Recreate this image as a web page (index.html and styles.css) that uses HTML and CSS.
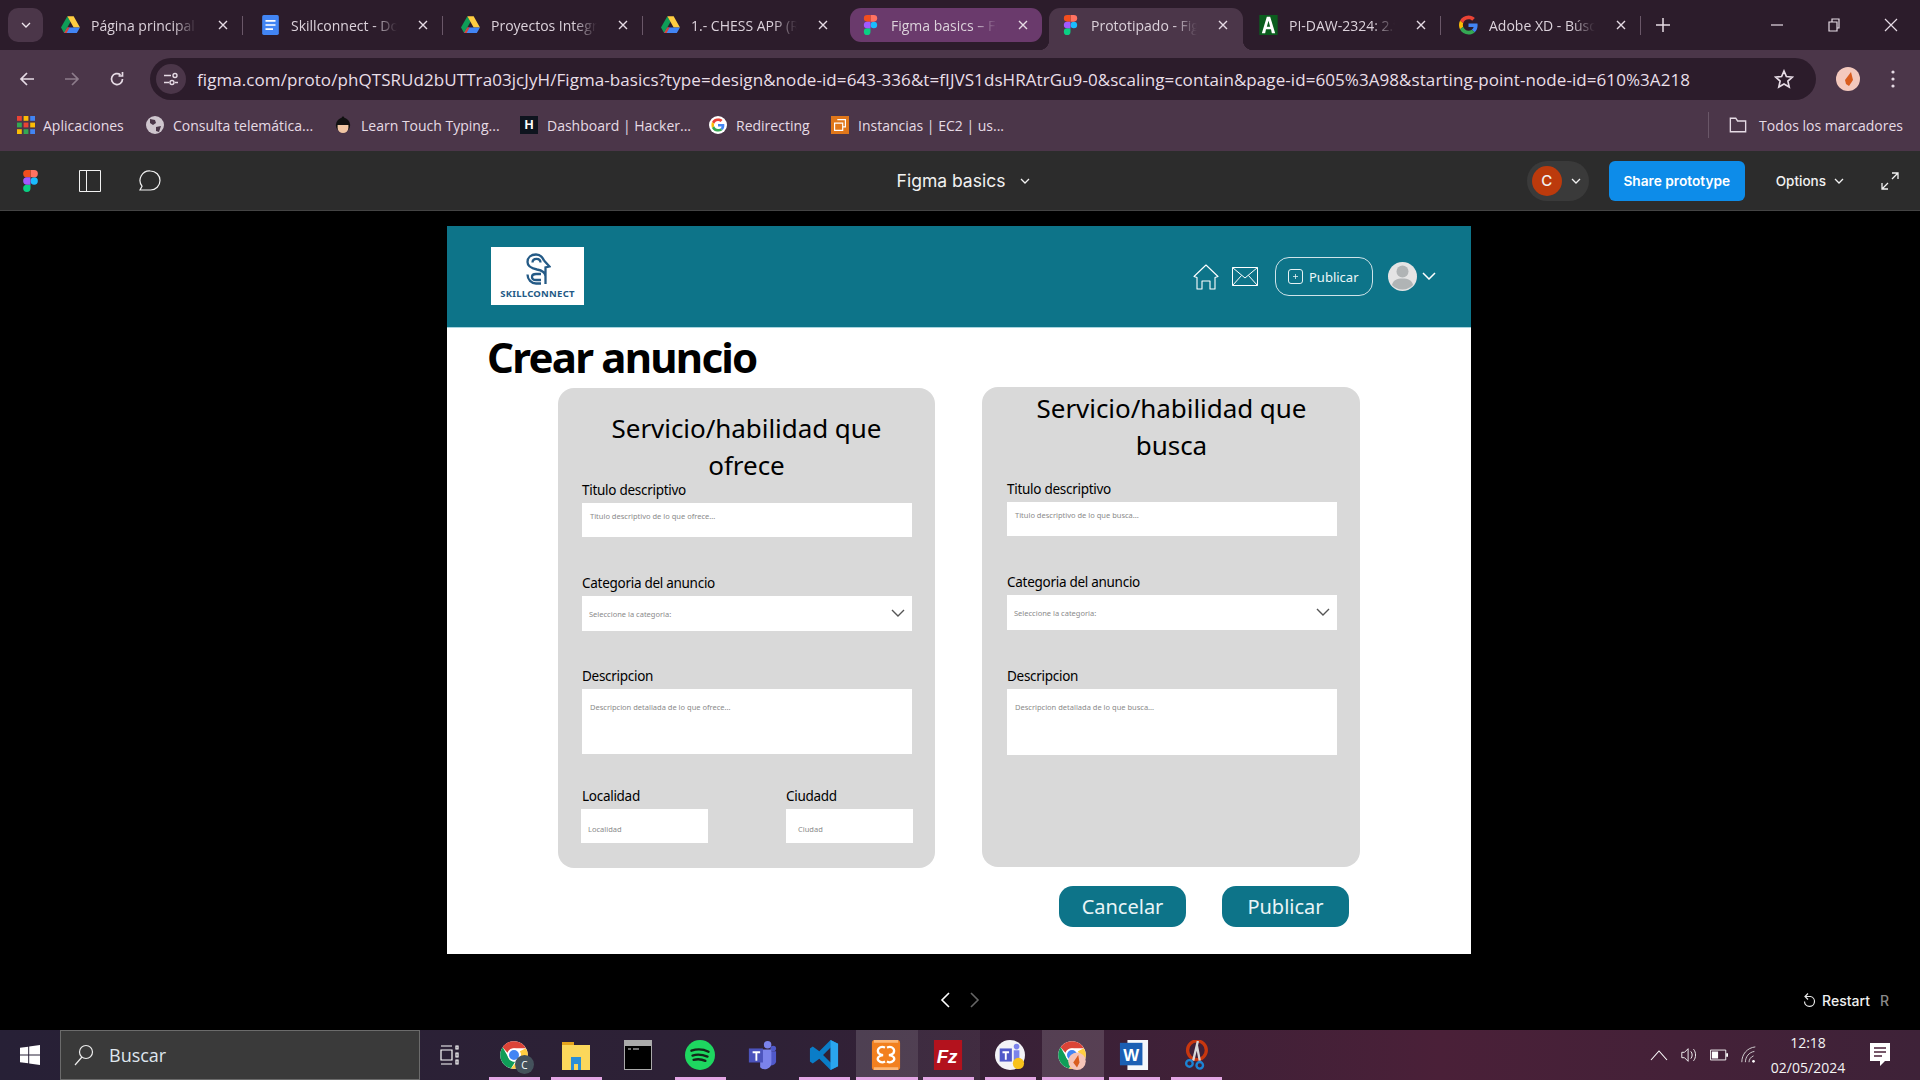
FILE: index.html
```html
<!DOCTYPE html>
<html lang="es">
<head>
<meta charset="utf-8">
<title>Figma basics – Figma</title>
<link rel="stylesheet" href="styles.css">
</head>
<body>
<svg class="defs" width="0" height="0" aria-hidden="true">
  <symbol id="figma" viewBox="0 0 38 57"><path fill="#1ABCFE" d="M19 28.5a9.5 9.5 0 1 1 19 0 9.5 9.5 0 0 1-19 0z"/><path fill="#0ACF83" d="M0 47.5A9.5 9.5 0 0 1 9.5 38H19v9.5a9.5 9.5 0 1 1-19 0z"/><path fill="#FF7262" d="M19 0v19h9.5a9.5 9.5 0 1 0 0-19H19z"/><path fill="#F24E1E" d="M0 9.5A9.5 9.5 0 0 0 9.5 19H19V0H9.5A9.5 9.5 0 0 0 0 9.5z"/><path fill="#A259FF" d="M0 28.5A9.5 9.5 0 0 0 9.5 38H19V19H9.5A9.5 9.5 0 0 0 0 28.5z"/></symbol>
  <symbol id="drive" viewBox="0 0 24 22"><path fill="#0F9D58" d="M8 0 0 14l4 7L12 7z"/><path fill="#FFCD40" d="M8 0h8l8 14h-8z"/><path fill="#4285F4" d="M8 14h16l-4 7H4z"/><path fill="#DB4437" d="M4 21l4-7h3l-4 7z"/></symbol>
  <symbol id="google" viewBox="0 0 48 48"><path fill="#EA4335" d="M24 9.5c3.54 0 6.71 1.22 9.21 3.6l6.85-6.85C35.9 2.38 30.47 0 24 0 14.62 0 6.51 5.38 2.56 13.22l7.98 6.19C12.43 13.72 17.74 9.5 24 9.5z"/><path fill="#4285F4" d="M46.98 24.55c0-1.57-.15-3.09-.38-4.55H24v9.02h12.94c-.58 2.96-2.26 5.48-4.78 7.18l7.73 6c4.51-4.18 7.09-10.36 7.09-17.65z"/><path fill="#FBBC05" d="M10.53 28.59c-.48-1.45-.76-2.99-.76-4.59s.27-3.14.76-4.59l-7.98-6.19C.92 16.46 0 20.12 0 24c0 3.88.92 7.54 2.56 10.78l7.97-6.19z"/><path fill="#34A853" d="M24 48c6.48 0 11.93-2.13 15.89-5.81l-7.73-6c-2.15 1.45-4.92 2.3-8.16 2.3-6.26 0-11.57-4.22-13.47-9.91l-7.98 6.19C6.51 42.62 14.62 48 24 48z"/></symbol>
  <symbol id="chrome" viewBox="0 0 24 24"><circle cx="12" cy="12" r="11" fill="#fff"/><path fill="#DB4437" d="M12 1a11 11 0 0 1 9.5 5.5H12a5.5 5.5 0 0 0-5.2 3.7L2.9 5.8A11 11 0 0 1 12 1z"/><path fill="#0F9D58" d="M2.9 5.8l4.8 8.3a5.5 5.5 0 0 0 5.2 3.3L9.6 22.7A11 11 0 0 1 2.9 5.8z"/><path fill="#FFCD40" d="M21.5 6.5A11 11 0 0 1 9.6 22.7l4.8-5.8A5.5 5.5 0 0 0 16.7 9z"/><circle cx="12" cy="12" r="4.6" fill="#4285F4" stroke="#fff" stroke-width="1.2"/></symbol>
  <symbol id="close" viewBox="0 0 10 10"><path d="M1 1l8 8M9 1l-8 8" stroke="currentColor" stroke-width="1.4" fill="none"/></symbol>
  <symbol id="chev" viewBox="0 0 10 6"><path d="M1 1l4 4 4-4" stroke="currentColor" stroke-width="1.3" fill="none"/></symbol>
</svg>

<header class="tabstrip">
  <button class="tabmenu"><svg class="i10"><use href="#chev"/></svg></button>
  <div class="tabs">
    <div class="tab sep"><svg class="fav"><use href="#drive"/></svg><span class="tabtext">Página principal - Google Drive</span><svg class="tabx"><use href="#close"/></svg></div>
    <div class="tab sep"><svg class="fav" viewBox="0 0 20 24"><path fill="#4285F4" d="M2 0h16a2 2 0 0 1 2 2v20a2 2 0 0 1-2 2H2a2 2 0 0 1-2-2V2a2 2 0 0 1 2-2z"/><path stroke="#fff" stroke-width="2" d="M4 7h12M4 12h12M4 17h9"/></svg><span class="tabtext">Skillconnect - Documentos</span><svg class="tabx"><use href="#close"/></svg></div>
    <div class="tab sep"><svg class="fav"><use href="#drive"/></svg><span class="tabtext">Proyectos Integrados - Drive</span><svg class="tabx"><use href="#close"/></svg></div>
    <div class="tab"><svg class="fav"><use href="#drive"/></svg><span class="tabtext">1.- CHESS APP (Rafa) - Drive</span><svg class="tabx"><use href="#close"/></svg></div>
    <div class="tab tab-group"><svg class="fav"><use href="#figma"/></svg><span class="tabtext">Figma basics – Figma</span><svg class="tabx"><use href="#close"/></svg></div>
    <div class="tab tab-active"><svg class="fav"><use href="#figma"/></svg><span class="tabtext">Prototipado - Figma</span><svg class="tabx"><use href="#close"/></svg></div>
    <div class="tab sep"><svg class="fav" viewBox="0 0 22 24"><path fill="#0b5d1e" d="M0 0h22v24H0z"/><path fill="#fff" d="M9 2h4l6 20h-4l-1-5H8l-1 5H3zm2 5-2 7h4z"/></svg><span class="tabtext">PI-DAW-2324: 2.ª evaluación</span><svg class="tabx"><use href="#close"/></svg></div>
    <div class="tab sep"><svg class="fav"><use href="#google"/></svg><span class="tabtext">Adobe XD - Búsqueda</span><svg class="tabx"><use href="#close"/></svg></div>
    <svg class="plus" viewBox="0 0 14 14"><path d="M7 0v14M0 7h14" stroke="#e6dbe5" stroke-width="1.5"/></svg>
  </div>
  <div class="winctl">
    <svg class="win" viewBox="0 0 14 14"><path d="M1 7h12" stroke="#e6dbe5" stroke-width="1.2"/></svg>
    <svg class="win" viewBox="0 0 14 14"><path d="M2 4h8v9H2zM5 4V1h7v9h-2" stroke="#e6dbe5" stroke-width="1.2" fill="none"/></svg>
    <svg class="win" viewBox="0 0 14 14"><path d="M1 1l12 12M13 1L1 13" stroke="#e6dbe5" stroke-width="1.2"/></svg>
  </div>
</header>

<nav class="toolbar">
  <svg class="nav" viewBox="0 0 16 16"><path d="M15 8H2M8 2 2 8l6 6" stroke="#e6dbe5" stroke-width="1.7" fill="none"/></svg>
  <svg class="nav" viewBox="0 0 16 16"><path d="M1 8h13M8 2l6 6-6 6" stroke="#8d7c8b" stroke-width="1.7" fill="none"/></svg>
  <svg class="nav" viewBox="0 0 16 16"><path d="M13.5 8A5.5 5.5 0 1 1 11.5 3.8M13.5 1v4h-4" stroke="#e6dbe5" stroke-width="1.7" fill="none"/></svg>
  <div class="omnibox">
    <span class="tune"><svg class="i16" viewBox="0 0 16 16"><path d="M1 4.500h7M1 11.500h5M12 11.500h3" stroke="#e6dbe5" stroke-width="1.500"/><circle cx="12" cy="4.500" r="2" fill="none" stroke="#e6dbe5" stroke-width="1.400"/><circle cx="9" cy="11.500" r="2" fill="none" stroke="#e6dbe5" stroke-width="1.400"/></svg></span>
    <span class="url">figma.com/proto/phQTSRUd2bUTTra03jcJyH/Figma-basics?type=design&amp;node-id=643-336&amp;t=fIJVS1dsHRAtrGu9-0&amp;scaling=contain&amp;page-id=605%3A98&amp;starting-point-node-id=610%3A218</span>
    <svg class="star" viewBox="0 0 20 20"><path d="M10 2l2.400 5.500 6 .6-4.500 4 1.300 5.900L10 15l-5.200 3 1.300-5.900-4.500-4 6-.6z" fill="none" stroke="#e6dbe5" stroke-width="1.700"/></svg>
  </div>
  <span class="profile"><svg viewBox="0 0 24 24"><circle cx="12" cy="12" r="12" fill="#f4c9bd"/><path fill="#d95d1e" d="M9 13l6-8 2 8-4 6-3-2z"/></svg></span>
  <svg class="dots" viewBox="0 0 4 18"><circle cx="2" cy="2" r="1.600" fill="#e6dbe5"/><circle cx="2" cy="9" r="1.600" fill="#e6dbe5"/><circle cx="2" cy="16" r="1.600" fill="#e6dbe5"/></svg>
</nav>

<div class="bookmarks">
  <div class="bm-list">
    <span class="bm bm-apps"><svg class="bmi" viewBox="0 0 15 15"><g><path fill="#ea4335" d="M0 0h4v4H0z"/><path fill="#fbbc05" d="M5.500 0h4v4h-4z"/><path fill="#4285f4" d="M11 0h4v4h-4z"/><path fill="#34a853" d="M0 5.500h4v4H0z"/><path fill="#ea4335" d="M5.500 5.500h4v4h-4z"/><path fill="#fbbc05" d="M11 5.500h4v4h-4z"/><path fill="#fbbc05" d="M0 11h4v4H0z"/><path fill="#34a853" d="M5.500 11h4v4h-4z"/><path fill="#4285f4" d="M11 11h4v4h-4z"/></g></svg>Aplicaciones</span>
    <span class="bm"><svg class="bmi" viewBox="0 0 18 18"><circle cx="9" cy="9" r="9" fill="#cfc6ce"/><path fill="#4b3649" d="M4 3l5 1 1 3-3 2-3-2zM10 11l5-1-2 6-3-1z"/></svg>Consulta telemática...</span>
    <span class="bm"><svg class="bmi" viewBox="0 0 18 20"><circle cx="9" cy="2" r="1.500" fill="#111"/><circle cx="9" cy="10" r="8" fill="#111"/><path fill="#f1c6a3" d="M3 10h12v3a6 6 0 0 1-12 0z"/></svg>Learn Touch Typing...</span>
    <span class="bm"><svg class="bmi" viewBox="0 0 20 20"><path fill="#0e141e" d="M0 0h20v20H0z"/><text x="10" y="14.500" text-anchor="middle" class="hr">H</text></svg>Dashboard | Hacker...</span>
    <span class="bm"><svg class="bmi" viewBox="0 0 48 48"><circle cx="24" cy="24" r="24" fill="#fff"/><g transform="translate(6 6) scale(.75)"><use href="#google" width="48" height="48"/></g></svg>Redirecting</span>
    <span class="bm"><svg class="bmi" viewBox="0 0 20 20"><path fill="#e0771a" d="M0 0h20v20H0z"/><path d="M7 4h9v8h-3M4 8h9v8H4z" fill="none" stroke="#fff" stroke-width="1.300"/></svg>Instancias | EC2 | us...</span>
  </div>
  <span class="bm bm-all"><svg class="bmi" viewBox="0 0 20 18"><path d="M1.500 1.500h6l2 3h9v12h-17z" fill="none" stroke="#e6dbe5" stroke-width="1.500"/></svg>Todos los marcadores</span>
</div>

<div class="figbar">
  <div class="fig-left">
    <svg class="figlogo"><use href="#figma"/></svg>
    <svg class="figico" viewBox="0 0 22 22"><path d="M.5.500h21v21H.5zM7.500.5v21" fill="none" stroke="#f2f2f2"/></svg>
    <svg class="figico" viewBox="0 0 22 22"><path d="M11.500 1a9.500 9.500 0 0 1 0 19H1l2-3.800A9.500 9.500 0 0 1 11.500 1z" fill="none" stroke="#f2f2f2" stroke-width="1.200"/></svg>
  </div>
  <div class="fig-title">Figma basics <svg class="i10"><use href="#chev"/></svg></div>
  <div class="fig-right">
    <span class="avatars"><span class="avatar">C</span><svg class="i10"><use href="#chev"/></svg></span>
    <button class="share">Share prototype</button>
    <span class="options">Options <svg class="i10"><use href="#chev"/></svg></span>
    <svg class="expand" viewBox="0 0 20 20"><path d="M12 2h6v6M18 2l-6 6M2 12v6h6M2 18l6-6" fill="none" stroke="#f2f2f2" stroke-width="1.300"/></svg>
  </div>
</div>

<main class="canvas">
  <section class="frame">
    <header class="apphead">
      <div class="logo">
        <svg class="logomark" viewBox="0 0 26 32"><path d="M19 7.500C17 3 14 1.500 11 1.500 6 1.500 2.500 4.500 2.500 9c0 5 4.500 6.500 9.500 7.500 4 .7 8 2 8.500 6.500M7.500 9.500C7.500 7 9.500 5.800 11.500 5.800S15.500 7 15.500 9.500M19 7.500l5.500 6-4 1V31M2.500 21.500c0 5 4 9 8.500 9h5M7 24c0-2 2-3 4-3h5M7 24c0 2 2 3 4 3h5" fill="none" stroke="#245a86" stroke-width="2.300"/></svg>
        <span class="logotext">SKILLCONNECT</span>
      </div>
      <div class="appnav">
        <svg class="home" viewBox="0 0 26 26"><path d="M1 12.500 13 1l12 11.500-3 1V25h-5v-8H9v8H4V13.500z" fill="none" stroke="#fff" stroke-width="1.100" stroke-linejoin="round"/></svg>
        <svg class="mail" viewBox="0 0 26 19"><path d="M.5.500h25v18H.5zM.5.500 13 11 25.500.5M.5 18.500l9-10M25.500 18.500l-9-10" fill="none" stroke="#fff"/></svg>
        <button class="pub-btn"><svg class="pub-ico" viewBox="0 0 15 15"><rect x=".5" y=".5" width="14" height="14" rx="2.500" fill="none" stroke="#e6f2f4"/><path d="M5 7.500h5M7.500 5v5" stroke="#e6f2f4" stroke-width=".8"/></svg>Publicar</button>
        <svg class="user" viewBox="0 0 29 29"><circle cx="14.500" cy="14.500" r="14.500" fill="#e4e4e4"/><circle cx="14.500" cy="9.500" r="6" fill="#b0b4b5"/><path fill="#b0b4b5" d="M4 23c1-5 5-6.500 10.500-6.500S24 18 25 23a14.500 14.500 0 0 1-21 0z"/></svg>
        <svg class="userchev" viewBox="0 0 14 8"><path d="M1 1l6 6 6-6" fill="none" stroke="#fff" stroke-width="1.500"/></svg>
      </div>
    </header>
    <h1 class="page-title">Crear anuncio</h1>
    <div class="cards">
      <form class="card card-offer">
        <h2 class="card-title">Servicio/habilidad que ofrece</h2>
        <div class="field"><label class="label">Titulo descriptivo</label><div class="input input-text">Titulo descriptivo de lo que ofrece...</div></div>
        <div class="field"><label class="label">Categoria del anuncio</label><div class="input input-select">Seleccione la categoria:<svg class="selchev" viewBox="0 0 14 8"><path d="M1 1l6 6 6-6" fill="none" stroke="#555" stroke-width="1.400"/></svg></div></div>
        <div class="field"><label class="label">Descripcion</label><div class="input input-area">Descripcion detallada de lo que ofrece...</div></div>
        <div class="field-pair">
          <div class="field-l"><label class="label">Localidad</label><div class="input input-short">Localidad</div></div>
          <div class="field-r"><label class="label">Ciudadd</label><div class="input input-short input-city">Ciudad</div></div>
        </div>
      </form>
      <form class="card card-seek">
        <h2 class="card-title">Servicio/habilidad que busca</h2>
        <div class="field"><label class="label">Titulo descriptivo</label><div class="input input-text">Titulo descriptivo de lo que busca...</div></div>
        <div class="field"><label class="label">Categoria del anuncio</label><div class="input input-select">Seleccione la categoria:<svg class="selchev" viewBox="0 0 14 8"><path d="M1 1l6 6 6-6" fill="none" stroke="#555" stroke-width="1.400"/></svg></div></div>
        <div class="field"><label class="label">Descripcion</label><div class="input input-area input-area-tall">Descripcion detallada de lo que busca...</div></div>
      </form>
    </div>
    <div class="actions">
      <button class="action">Cancelar</button>
      <button class="action">Publicar</button>
    </div>
  </section>
  <div class="pager">
    <div class="pager-arrows">
      <svg class="arrow" viewBox="0 0 10 16"><path d="M9 1 2 8l7 7" fill="none" stroke="#fff" stroke-width="1.600"/></svg>
      <svg class="arrow" viewBox="0 0 10 16"><path d="M1 1l7 7-7 7" fill="none" stroke="#666" stroke-width="1.600"/></svg>
    </div>
    <div class="restart"><svg class="restart-ico" viewBox="0 0 14 16"><path d="M3.500 4.500h5a5 5 0 1 1-6 5M6 1.500l-3 3 3 3" fill="none" stroke="#e6e6e6" stroke-width="1.200"/></svg>Restart<span class="restart-key">R</span></div>
  </div>
</main>

<footer class="taskbar">
  <svg class="start" viewBox="0 0 20 20"><path fill="#fff" d="M0 2.800 8.200 1.700v7.800H0zM9.200 1.500 20 0v9.500H9.200zM0 10.500h8.200v7.800L0 17.200zM9.200 10.500H20V20L9.200 18.500z"/></svg>
  <div class="search"><svg class="search-ico" viewBox="0 0 20 22"><circle cx="12" cy="8" r="6.500" fill="none" stroke="#eee" stroke-width="1.200"/><path d="M8 13l-7 8" stroke="#eee" stroke-width="1.200"/></svg>Buscar</div>
  <svg class="taskview" viewBox="0 0 20 20"><path d="M1 1h11M1 19h11M1 5h11v10H1zM16 1h2v3h-2zM16 8h2v4h-2zM16 15h2v4h-2z" fill="none" stroke="#fff" stroke-width="1.200"/></svg>
  <div class="apps">
    <div class="app on"><svg class="appi"><use href="#chrome"/></svg><span class="badge">C</span></div>
    <div class="app on"><svg class="appi" viewBox="0 0 28 30"><path fill="#e5a41c" d="M0 2h12v4H0z"/><path fill="#fbd75b" d="M0 5h28v25H0z"/><path fill="#2b8fd6" d="M9 17h10v13h-3v-6h-4v6H9z"/></svg></div>
    <div class="app"><svg class="appi" viewBox="0 0 28 30"><path fill="#aaa" d="M0 0h28v30H0z"/><path fill="#000" d="M1 6h26v23H1z"/><path d="M4 9h3M9 9h6" stroke="#ddd"/></svg></div>
    <div class="app on"><svg class="appi" viewBox="0 0 28 28"><circle cx="14" cy="14" r="14" fill="#1ed760"/><path d="M6 10c6-2 11-1.500 16 1M7 14.500c5-1.500 9-1 14 1M8 18.500c4-1 8-.5 11 1" fill="none" stroke="#14261a" stroke-width="2.200" stroke-linecap="round"/></svg></div>
    <div class="app"><svg class="appi" viewBox="0 0 30 32"><circle cx="21" cy="5" r="4" fill="#7b83eb"/><circle cx="27" cy="9" r="3" fill="#5059c9"/><path fill="#5059c9" d="M22 12h8v11a5 5 0 0 1-8 3z"/><path fill="#7b83eb" d="M13 10h12v14a7 7 0 0 1-12 5z"/><path fill="#4b53bc" d="M1 9h15v15H1z"/><path fill="#fff" d="M5 12h8v2h-3v8H8v-8H5z"/></svg></div>
    <div class="app on"><svg class="appi" viewBox="0 0 30 32"><path fill="#0a7dc8" d="M22 0l8 4v24l-8 4-12-12-7 5-3-2V9l3-2 7 5zm0 8-8 8 8 8z"/><path fill="#2aa5ee" d="M22 0l8 4v24l-8 4z"/></svg></div>
    <div class="app on hot"><svg class="appi" viewBox="0 0 30 32"><rect width="30" height="32" rx="3" fill="#f2801f"/><path fill="#fbb677" d="M2 0h26v3H2zM2 29h26v3H2z"/><path d="M14 8c-6-2-9 2-7 6 1 1 3 2 5 2-5 0-7 4-5 6 2 2 5 2 7 1M16 8c6-2 9 2 7 6-1 1-3 2-5 2 5 0 7 4 5 6-2 2-5 2-7 1" fill="none" stroke="#fff" stroke-width="2.400"/></svg></div>
    <div class="app on warm"><svg class="appi" viewBox="0 0 30 32"><path fill="#b3121d" d="M0 0h30v32H0z"/><text x="14" y="24" text-anchor="middle" class="fz">Fz</text></svg></div>
    <div class="app on"><svg class="appi" viewBox="0 0 32 32"><circle cx="16" cy="16" r="16" fill="#f3f3f7"/><path fill="#5059c9" d="M5 9h13v14H5z"/><path fill="#fff" d="M8 12h7v2h-2.500v7h-2v-7H8z"/><path fill="#7b83eb" d="M20 11h6v10a4 4 0 0 1-6 2z"/><circle cx="23" cy="7" r="3" fill="#7b83eb"/><circle cx="25" cy="25" r="6" fill="#f8c21c"/></svg></div>
    <div class="app on hot"><svg class="appi" viewBox="0 0 24 24"><use href="#chrome" width="24" height="24"/><circle cx="16" cy="17" r="7" fill="#f5c4b8"/><path fill="#d95d1e" d="M13 18l4-6 1 6-2 4z"/></svg></div>
    <div class="app on"><svg class="appi" viewBox="0 0 30 32"><path fill="#f4f7fb" d="M8 0h22v32H8z"/><path fill="#1b5fb4" d="M0 3h24v24H0z"/><text x="12" y="22" text-anchor="middle" class="wd">W</text></svg></div>
    <div class="app on"><svg class="appi" viewBox="0 0 30 32"><circle cx="16" cy="11" r="10" fill="none" stroke="#c8370f" stroke-width="3.500"/><path d="M17 1l-5 21M16 6l3 16" stroke="#d8d8d8" stroke-width="2.500"/><circle cx="8" cy="25" r="3.500" fill="none" stroke="#1c84d4" stroke-width="2.500"/><circle cx="19" cy="27" r="3.500" fill="none" stroke="#1c84d4" stroke-width="2.500"/></svg></div>
  </div>
  <div class="tray">
    <svg class="tray-i" viewBox="0 0 18 12"><path d="M1 11l8-9 8 9" fill="none" stroke="#fff" stroke-width="1.100"/></svg>
    <svg class="tray-i" viewBox="0 0 20 20"><path d="M2 7h3l4-4v14l-4-4H2zM12 6c2 2 2 6 0 8M15 3.500c3 3.500 3 9.500 0 13" fill="none" stroke="#fff"/></svg>
    <svg class="tray-i" viewBox="0 0 20 14"><path d="M.5 1.500h17v11H.5z" fill="none" stroke="#fff"/><path fill="#fff" d="M2 3h7v8H2zM18 5h2v4h-2z"/></svg>
    <svg class="tray-i" viewBox="0 0 18 20"><path d="M1 18C1 9 7 2 16 1M5 18c0-6 4-11 10-12M9 18c0-3 2-6 5-7" fill="none" stroke="#ddd"/><circle cx="14" cy="17" r="1.500" fill="#fff"/></svg>
    <div class="clock"><span>12:18</span><span>02/05/2024</span></div>
    <svg class="notif" viewBox="0 0 20 24"><path fill="#fff" d="M0 0h20v18h-5l-5 5v-5H0z"/><path d="M4 5h12M4 9h12M4 13h8" stroke="#4a2038" stroke-width="1.300"/></svg>
  </div>
</footer>
</body>
</html>
```

FILE: styles.css
```css
* { box-sizing: border-box; }
html, body { margin: 0; padding: 0; }
body { width: 1920px; height: 1080px; overflow: hidden; background: #000; font-family: "Open Sans", "Noto Sans", sans-serif; display: flex; flex-direction: column; }
button { font: inherit; border: 0; padding: 0; }
.defs { position: absolute; }
.i10 { width: 10px; height: 6px; color: inherit; }
.i16 { width: 16px; height: 16px; display: block; }

/* Tab strip */
.tabstrip { height: 50px; background: #2c1c2b; display: flex; align-items: stretch; color: #e6dbe5; flex: none; }
.tabmenu { width: 35px; height: 34px; margin: 8px 0 0 8px; border-radius: 10px; background: #4b3649; color: #f0e8ef; display: flex; align-items: center; justify-content: center; }
.tabs { display: flex; margin-left: 3px; align-items: stretch; width: 1645px; flex: none; }
.tab { width: 200px; display: flex; align-items: center; height: 34px; margin-top: 8px; padding-left: 15px; position: relative; font-size: 14px; flex: none; }
.tab.sep::after { content: ""; position: absolute; right: 3px; top: 8px; width: 1px; height: 19px; background: #6a5768; }
.fav { width: 19px; height: 20px; flex: none; }
.tabtext { margin-left: 11px; width: 106px; white-space: nowrap; overflow: hidden; color: #dcd2db; -webkit-mask-image: linear-gradient(90deg, #000 78%, transparent 100%); mask-image: linear-gradient(90deg, #000 78%, transparent 100%); }
.tabx { width: 10px; height: 10px; margin-left: 21px; flex: none; color: #e6dbe5; }
.tab-group { background: #6a3a6c; border-radius: 11px; width: 192px; padding-left: 11px; margin-right: 7px; margin-left: 4px; color: #fff; }
.tab-active { background: #4b3649; border-radius: 11px 11px 0 0; height: 42px; width: 194px; padding: 0 0 8px 12px; margin-right: 1px; }
.tab-active::before, .tab-active::after { content: ""; position: absolute; bottom: 0; width: 10px; height: 10px; }
.tab-active::before { left: -10px; background: radial-gradient(circle at 0 0, transparent 10px, #4b3649 10.5px); }
.tab-active::after { right: -10px; background: radial-gradient(circle at 100% 0, transparent 10px, #4b3649 10.5px); }
.plus { width: 14px; height: 14px; margin: 18px 0 0 12px; flex: none; }
.winctl { display: flex; margin-left: 79px; gap: 43px; align-items: center; }
.win { width: 14px; height: 14px; }

/* Address toolbar */
.toolbar { height: 50px; background: #4b3649; flex: none; display: flex; align-items: center; padding: 8px 0 0 19px; gap: 29px; }
.nav { width: 16px; height: 16px; flex: none; }
.omnibox { width: 1666px; height: 42px; border-radius: 21px; background: #2c1c2b; display: flex; align-items: center; padding-left: 6px; margin-left: -4px; flex: none; }
.tune { width: 30px; height: 30px; border-radius: 50%; background: #4b3649; display: flex; align-items: center; justify-content: center; flex: none; }
.url { margin-left: 11px; color: #e9dfe8; font-size: 17px; letter-spacing: .07px; white-space: nowrap; width: 1578px; flex: none; }
.star { width: 20px; height: 20px; margin-left: -1px; flex: none; }
.profile { width: 24px; height: 24px; flex: none; margin: 0 -2px 0 -9px; display: block; }
.profile svg { display: block; width: 24px; height: 24px; }
.dots { width: 4px; height: 18px; flex: none; margin-left: 4px; }

/* Bookmarks */
.bookmarks { height: 51px; background: #4b3649; flex: none; display: flex; align-items: center; justify-content: space-between; padding: 0 17px 1px 17px; color: #e6dbe5; font-size: 14px; }
.bm-list { display: grid; grid-template-columns: 129px 188px 186px 189px 122px auto; }
.bm { display: flex; align-items: center; gap: 9px; white-space: nowrap; }
.bm-apps { gap: 8px; }
.bmi { width: 18px; height: 18px; flex: none; }
.hr { font: 700 14px "Liberation Sans", sans-serif; fill: #fff; }
.bm-all { border-left: 1px solid #6a5768; padding-left: 20px; height: 26px; gap: 12px; }

/* Figma bar */
.figbar { height: 60px; background: #2c2c2c; border-bottom: 1px solid #444; flex: none; display: grid; grid-template-columns: 1fr auto 1fr; align-items: center; color: #f2f2f2; }
.fig-left { display: flex; align-items: center; padding-left: 23px; gap: 38px; }
.figlogo { width: 15px; height: 22px; }
.figico { width: 22px; height: 22px; }
.fig-left .figico:nth-child(2) { margin-left: 3px; }
.fig-title { font: 400 17.500px "Inter", sans-serif; display: flex; align-items: center; gap: 15px; margin-left: 7px; }
.fig-right { display: flex; align-items: center; justify-content: flex-end; padding-right: 20px; }
.avatars { width: 62px; height: 40px; border-radius: 20px; background: #3a3a3a; display: flex; align-items: center; padding-left: 5px; gap: 9px; }
.avatar { width: 30px; height: 30px; border-radius: 50%; background: #bc3a0c; display: flex; align-items: center; justify-content: center; font: 500 15px "Inter", sans-serif; }
.share { width: 136px; height: 40px; margin-left: 20px; background: #0d8ce9; color: #fff; border-radius: 6px; font: 600 13.700px "Inter", sans-serif; }
.options { margin-left: 31px; font: 500 13.500px "Inter", sans-serif; display: flex; align-items: center; gap: 8px; }
.expand { width: 20px; height: 20px; margin-left: 36px; }

/* Canvas */
.canvas { flex: 1; min-height: 0; display: flex; flex-direction: column; padding-top: 15px; }
.frame { width: 1024px; height: 728px; margin-left: 447px; background: #fff; color: #000; font-family: "Noto Sans", sans-serif; flex: none; }
.apphead { height: 102px; background: #0d7489; border-bottom: 1px solid #a8d4df; display: flex; justify-content: space-between; align-items: flex-start; padding: 21px 35px 0 44px; }
.logo { width: 93px; height: 58px; background: #fff; display: flex; flex-direction: column; align-items: center; padding-top: 6px; }
.logomark { width: 26px; height: 32px; display: block; }
.logotext { font: 700 9.500px "Noto Sans", sans-serif; color: #245a86; margin-top: 2px; line-height: 14px; letter-spacing: .25px; }
.appnav { display: flex; align-items: center; height: 39px; margin-top: 10px; }
.home { width: 26px; height: 26px; }
.mail { width: 26px; height: 19px; margin-left: 13px; }
.pub-btn { width: 98px; height: 39px; margin-left: 17px; border: 1px solid #cfe4e9; border-radius: 14px; background: transparent; color: #eef6f8; font-size: 13px; display: flex; align-items: center; padding-left: 12px; gap: 6px; }
.pub-ico { width: 15px; height: 15px; }
.user { width: 29px; height: 29px; margin-left: 15px; }
.userchev { width: 14px; height: 8px; margin: -2px 0 0 5px; }
.page-title { margin: 0 0 0 40px; font-size: 42px; letter-spacing: -1.750px; font-weight: 700; line-height: 58px; height: 59px; }
.cards { display: flex; align-items: flex-start; padding-left: 111px; gap: 47px; }
.card { width: 377px; height: 480px; background: #d9d9d9; border-radius: 16px; padding: 0 24px; }
.card-offer { margin-top: 1px; }
.card-seek { width: 378px; padding-left: 25px; }
.card-title { margin: 0; font-size: 26px; letter-spacing: -.05px; font-weight: 400; line-height: 37px; text-align: center; }
.card-offer .card-title { padding-top: 22px; margin-bottom: -3px; }
.card-seek .card-title { padding-top: 3px; margin-bottom: 16px; }
.field { margin-bottom: 36px; }
.card-offer .field:first-of-type { margin-bottom: 37px; }
.card-seek .field { margin-bottom: 37px; }
.label { display: block; font-size: 13.500px; letter-spacing: -.28px; line-height: 18px; margin-bottom: 4px; }
.input { background: #fff; width: 330px; color: #8a8a8a; font-size: 7.500px; display: flex; padding-left: 8px; position: relative; }
.input-text { height: 34px; padding-top: 8px; }
.input-select { height: 35px; align-items: center; padding-left: 7px; }
.input-area { height: 65px; padding-top: 13px; }
.input-area-tall { height: 66px; }
.selchev { position: absolute; right: 7px; top: 13px; width: 14px; height: 8px; }
.field-pair { display: grid; grid-template-columns: 127px 127px; justify-content: space-between; margin-top: -3px; width: 331px; }
.field-l { margin-left: -1px; }
.field-l .label { margin-left: 1px; }
.input-short { width: 127px; height: 34px; align-items: center; padding: 5px 0 0 7px; }
.input-city { margin-top: 1px; padding-left: 12px; }
.actions { display: flex; justify-content: flex-end; gap: 36px; padding-right: 122px; margin-top: 18px; }
.action { width: 127px; height: 41px; border-radius: 14px; background: #0d7489; color: #eaf5f7; font-size: 20px; }

/* Pager */
.pager { flex: 1; display: flex; align-items: center; padding-top: 16px; }
.pager-arrows { display: flex; gap: 20px; margin-left: 940px; }
.arrow { width: 10px; height: 16px; }
.restart { margin-left: auto; margin-right: 31px; display: flex; align-items: center; color: #f0f0f0; font: 500 14px "Inter", sans-serif; gap: 6px; }
.restart-ico { width: 14px; height: 16px; }
.restart-key { color: #8a8a8a; margin-left: 4px; }

/* Taskbar */
.taskbar { height: 50px; flex: none; background: linear-gradient(90deg, #272036 0%, #2e2136 40%, #4a2038 75%, #3e2238 100%); display: flex; align-items: center; color: #fff; position: relative; }
.start { width: 20px; height: 20px; margin-left: 20px; flex: none; }
.search { width: 360px; height: 50px; margin-left: 20px; background: #3a3a3a; border: 1px solid #6b6b6b; display: flex; align-items: center; font-size: 18px; color: #dfe6ee; padding-left: 13px; gap: 15px; flex: none; }
.search-ico { width: 20px; height: 22px; }
.taskview { width: 20px; height: 20px; margin-left: 20px; flex: none; }
.apps { display: grid; grid-template-columns: repeat(12, 62px); margin-left: 24px; height: 50px; }
.app { position: relative; display: flex; align-items: center; justify-content: center; }
.app.on::after { content: ""; position: absolute; left: 5px; right: 6px; bottom: 0; height: 3px; background: #e3a6e5; }
.app.hot { background: rgba(255, 255, 255, .14); }
.app.hot::after { left: 0; right: 0; }
.app.warm { background: rgba(255, 255, 255, .05); }
.appi { width: 30px; height: 30px; margin-right: 2px; }
.badge { position: absolute; left: 31px; top: 25px; width: 19px; height: 19px; border-radius: 50%; background: #44525c; font-size: 10px; display: flex; align-items: center; justify-content: center; }
.fz { font: italic 700 20px "Liberation Sans", sans-serif; fill: #fff; }
.wd { font: 700 18px "Liberation Sans", sans-serif; fill: #fff; }
.tray { margin-left: auto; display: flex; align-items: center; padding-right: 30px; gap: 12px; }
.tray-i { width: 18px; height: 18px; }
.clock { display: flex; flex-direction: column; align-items: center; font-size: 14px; line-height: 25px; width: 78px; margin: 0 11px 0 -1px; color: #f4f4f4; }
.notif { width: 20px; height: 24px; }
```
